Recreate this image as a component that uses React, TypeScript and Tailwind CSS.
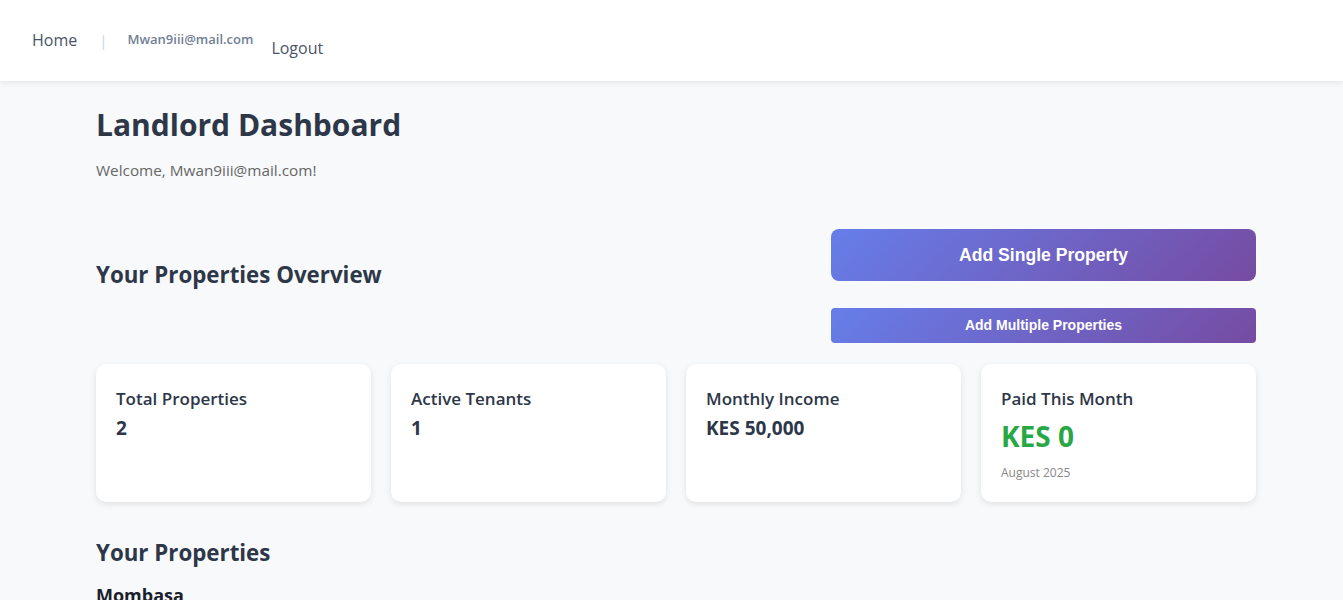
import React from "react";

const font = { fontFamily: '"Open Sans", "Noto Sans", sans-serif' };
const grad = "bg-[linear-gradient(135deg,#667eea_0%,#764ba2_100%)]";

function StatCard({ title, children }: { title: string; children: React.ReactNode }) {
  return (
    <div className="h-[138px] rounded-[10px] bg-white px-5 pt-[23px] shadow-[0_2px_6px_rgba(0,0,0,0.1)]">
      <h3 className="text-[17px] font-semibold leading-[24px] text-[#2d3748]">{title}</h3>
      {children}
    </div>
  );
}

export default function App() {
  return (
    <div className="min-h-[600px] bg-[#f7f9fb]" style={font}>
      <header className="flex h-[81px] items-start bg-white px-8 shadow-[0_2px_6px_rgba(0,0,0,0.08)]">
        <a className="mt-[30px] text-[16px] font-medium leading-[20px] text-[#4a5568]">Home</a>
        <span className="ml-[22px] mr-[20px] mt-[30px] text-[15px] leading-[20px] text-[#cbd5e0]">|</span>
        <span className="mt-[30px] text-[13px] font-semibold leading-[18px] text-[#718096]">Mwan9iii@mail.com</span>
        <a className="ml-[18px] mt-[38px] text-[16px] font-medium leading-[20px] text-[#4a5568]">Logout</a>
      </header>
      <main className="ml-[96px] w-[1160px]">
        <h1 className="mt-[23px] text-[30px] font-bold leading-[42px] text-[#2d3748]">Landlord Dashboard</h1>
        <p className="mt-[14px] text-[15.3px] leading-[20px] text-[#666]">Welcome, Mwan9iii@mail.com!</p>
        <div className="mt-[49px] flex items-start justify-between">
          <h2 className="mt-[31px] text-[22.3px] font-bold leading-[30px] text-[#2d3748]">Your Properties Overview</h2>
          <div className="flex w-[425px] flex-col gap-[27px]" style={{ fontFamily: '"Liberation Sans", Arial, sans-serif' }}>
            <button className={`h-[52px] rounded-[8px] ${grad} text-[17.6px] font-bold text-white`}>
              Add Single Property
            </button>
            <button className={`h-[35px] rounded-[4px] ${grad} text-[14px] font-bold text-white`}>
              Add Multiple Properties
            </button>
          </div>
        </div>
        <div className="mt-[21px] grid grid-cols-4 gap-5">
          <StatCard title="Total Properties">
            <p className="mt-[5px] text-[19px] font-bold leading-[24px] text-[#2d3748]">2</p>
          </StatCard>
          <StatCard title="Active Tenants">
            <p className="mt-[5px] text-[19px] font-bold leading-[24px] text-[#2d3748]">1</p>
          </StatCard>
          <StatCard title="Monthly Income">
            <p className="mt-[5px] text-[19px] font-bold leading-[24px] text-[#2d3748]">KES 50,000</p>
          </StatCard>
          <StatCard title="Paid This Month">
            <p className="mt-[7px] text-[28px] font-bold leading-[36px] text-[#28a745]">KES 0</p>
            <p className="mt-[11px] text-[12px] leading-[16px] text-[#888]">August 2025</p>
          </StatCard>
        </div>
        <h2 className="mt-[36px] text-[22.3px] font-bold leading-[30px] text-[#2d3748]">Your Properties</h2>
        <h3 className="mt-[15px] text-[18px] font-bold leading-[24px] text-[#1a202c]">Mombasa</h3>
      </main>
    </div>
  );
}
